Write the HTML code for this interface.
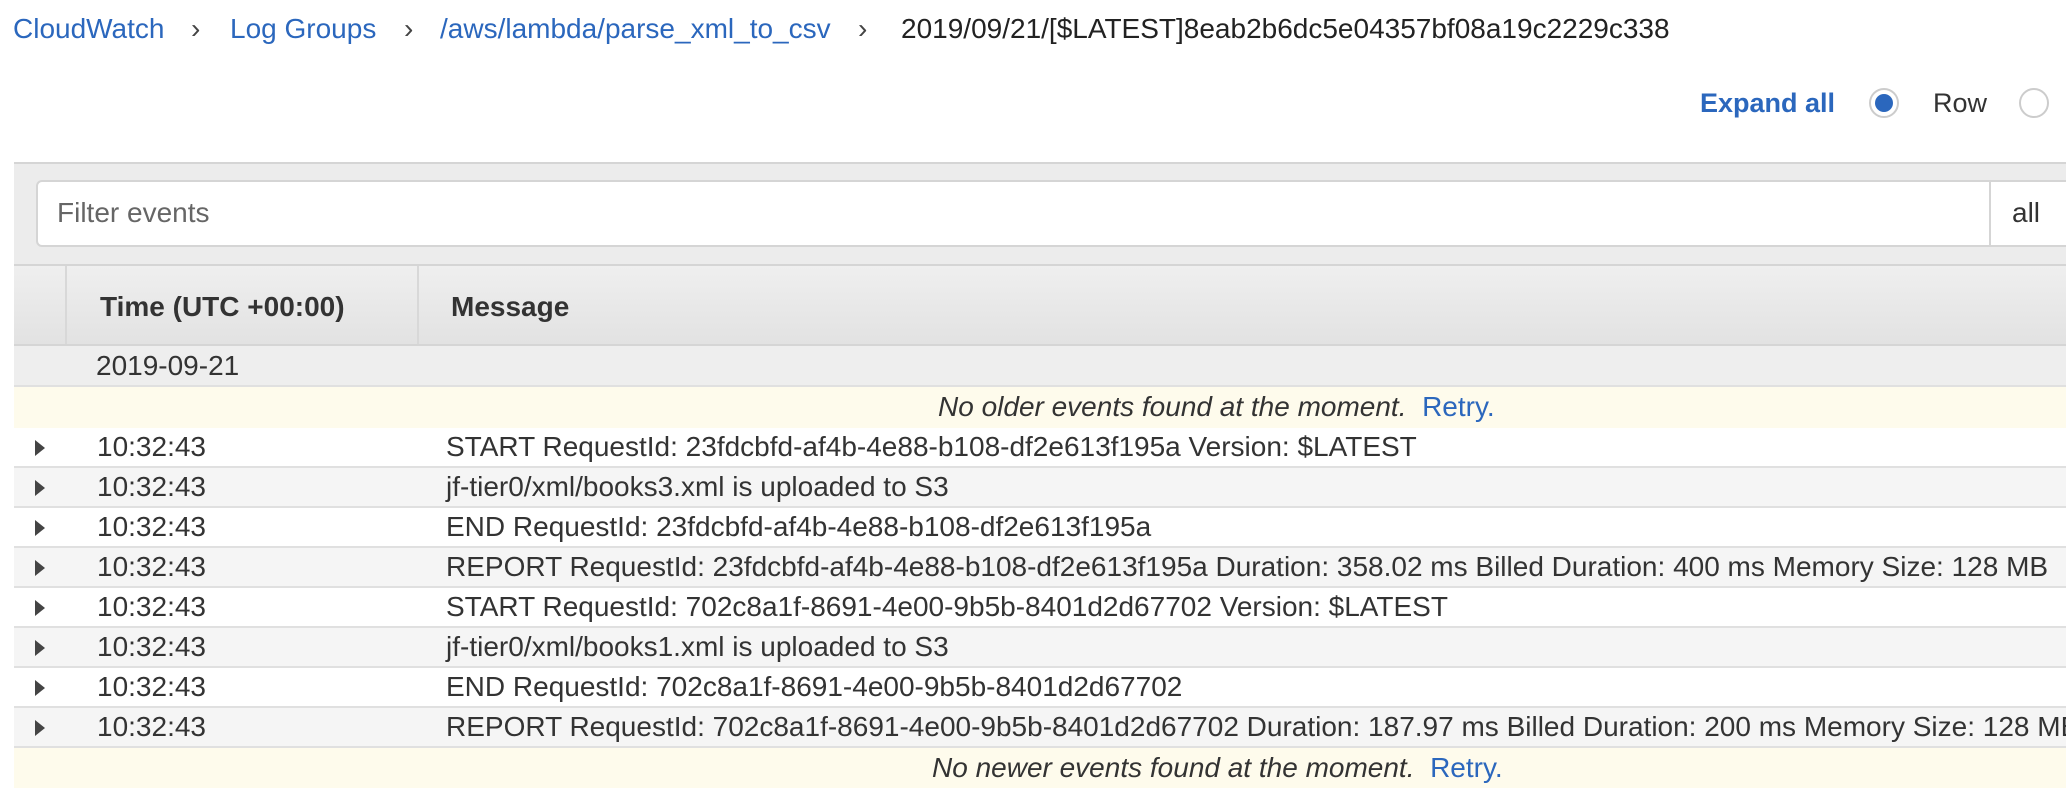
<!DOCTYPE html>
<html><head><style>
*{margin:0;padding:0;box-sizing:border-box}
body{width:2066px;height:780px;overflow:hidden;background:#fff;font-family:"Liberation Sans",Arial,sans-serif;color:#333;position:relative}
.a{position:absolute;white-space:nowrap}
.bc{top:12px;font-size:28px;line-height:34px}
.blue{color:#2b67bd}
.row{position:absolute;left:14px;width:2052px;height:40px;border-bottom:2px solid #e0e0e0;font-size:28px;line-height:38px;overflow:hidden;white-space:nowrap}
.row .tri{position:absolute;left:21px;top:12px;width:0;height:0;border-top:8px solid transparent;border-bottom:8px solid transparent;border-left:10px solid #444}
.row .t{position:absolute;left:83px}
.row .m{position:absolute;left:432px;white-space:nowrap}
.yel{position:absolute;left:14px;width:2052px;background:#fefbec;font-size:28px;line-height:40px;font-style:italic;color:#333}
.yel div{position:absolute;white-space:nowrap}
.yel span{font-style:normal;color:#2b67bd}
</style></head><body>
<div class="a bc blue" style="left:13px">CloudWatch</div>
<div class="a bc" style="left:191px;color:#444">›</div>
<div class="a bc blue" style="left:230px">Log Groups</div>
<div class="a bc" style="left:404px;color:#444">›</div>
<div class="a bc blue" style="left:440px">/aws/lambda/parse_xml_to_csv</div>
<div class="a bc" style="left:858px;color:#444">›</div>
<div class="a bc" style="left:901px;color:#222">2019/09/21/[$LATEST]8eab2b6dc5e04357bf08a19c2229c338</div>

<div class="a" style="left:1700px;top:86px;font-size:27px;font-weight:bold;color:#2b67bd;line-height:34px">Expand all</div>
<div class="a" style="left:1869px;top:88px;width:30px;height:30px;border-radius:50%;border:2px solid #ccc;background:#fff"></div>
<div class="a" style="left:1875px;top:94px;width:18px;height:18px;border-radius:50%;background:#2b67bd"></div>
<div class="a" style="left:1933px;top:86px;font-size:27px;line-height:34px;color:#333">Row</div>
<div class="a" style="left:2019px;top:88px;width:30px;height:30px;border-radius:50%;border:2px solid #ccc;background:#fff"></div>

<div class="a" style="left:14px;top:162px;width:2052px;height:102px;background:#ececec;border-top:2px solid #d5d5d5"></div>
<div class="a" style="left:36px;top:180px;width:2040px;height:67px;background:#fff;border:2px solid #d5d5d5;border-radius:6px"></div>
<div class="a" style="left:57px;top:196px;font-size:28px;line-height:34px;color:#666">Filter events</div>
<div class="a" style="left:1989px;top:182px;width:2px;height:64px;background:#d5d5d5"></div>
<div class="a" style="left:2012px;top:196px;font-size:28px;line-height:34px;color:#333">all</div>

<div class="a" style="left:14px;top:264px;width:2052px;height:82px;background:linear-gradient(#efefef,#e2e2e2);border-top:2px solid #d5d5d5;border-bottom:2px solid #d5d5d5"></div>
<div class="a" style="left:65px;top:266px;width:2px;height:78px;background:#d8d8d8"></div>
<div class="a" style="left:417px;top:266px;width:2px;height:78px;background:#d8d8d8"></div>
<div class="a" style="left:100px;top:290px;font-size:28px;font-weight:bold;line-height:34px;color:#333">Time (UTC +00:00)</div>
<div class="a" style="left:451px;top:290px;font-size:28px;font-weight:bold;line-height:34px;color:#333">Message</div>

<div class="a" style="left:14px;top:346px;width:2052px;height:41px;background:#eee;border-bottom:2px solid #e0e0e0"></div>
<div class="a" style="left:96px;top:349px;font-size:28px;line-height:34px;color:#333">2019-09-21</div>

<div class="yel" style="top:387px;height:41px"><div style="left:924px">No older events found at the moment.&nbsp; <span>Retry.</span></div></div>

<div class="row" style="top:428px;background:#fff"><div class="tri"></div><div class="t">10:32:43</div><div class="m">START RequestId: 23fdcbfd-af4b-4e88-b108-df2e613f195a Version: $LATEST</div></div>
<div class="row" style="top:468px;background:#f5f5f5"><div class="tri"></div><div class="t">10:32:43</div><div class="m">jf-tier0/xml/books3.xml is uploaded to S3</div></div>
<div class="row" style="top:508px;background:#fff"><div class="tri"></div><div class="t">10:32:43</div><div class="m">END RequestId: 23fdcbfd-af4b-4e88-b108-df2e613f195a</div></div>
<div class="row" style="top:548px;background:#f5f5f5"><div class="tri"></div><div class="t">10:32:43</div><div class="m">REPORT RequestId: 23fdcbfd-af4b-4e88-b108-df2e613f195a Duration: 358.02 ms Billed Duration: 400 ms Memory Size: 128 MB</div></div>
<div class="row" style="top:588px;background:#fff"><div class="tri"></div><div class="t">10:32:43</div><div class="m">START RequestId: 702c8a1f-8691-4e00-9b5b-8401d2d67702 Version: $LATEST</div></div>
<div class="row" style="top:628px;background:#f5f5f5"><div class="tri"></div><div class="t">10:32:43</div><div class="m">jf-tier0/xml/books1.xml is uploaded to S3</div></div>
<div class="row" style="top:668px;background:#fff"><div class="tri"></div><div class="t">10:32:43</div><div class="m">END RequestId: 702c8a1f-8691-4e00-9b5b-8401d2d67702</div></div>
<div class="row" style="top:708px;background:#f5f5f5"><div class="tri"></div><div class="t">10:32:43</div><div class="m">REPORT RequestId: 702c8a1f-8691-4e00-9b5b-8401d2d67702 Duration: 187.97 ms Billed Duration: 200 ms Memory Size: 128 MB</div></div>

<div class="yel" style="top:748px;height:40px"><div style="left:918px">No newer events found at the moment.&nbsp; <span>Retry.</span></div></div>
</body></html>
